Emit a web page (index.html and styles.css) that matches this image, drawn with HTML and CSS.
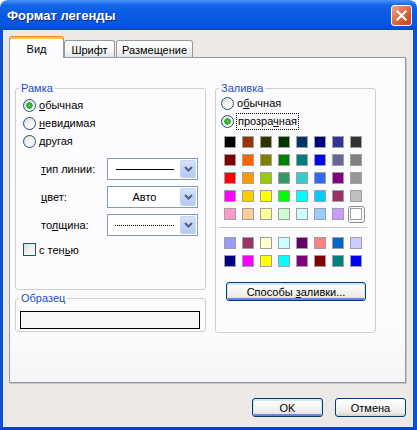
FILE: index.html
```html
<!DOCTYPE html>
<html>
<head>
<meta charset="utf-8">
<link rel="stylesheet" href="styles.css">
</head>
<body>
<div class="window">
  <div class="titlebar">
    <span class="title">Формат легенды</span>
    <div class="close">
      <svg width="11" height="11" viewBox="0 0 11 11"><path d="M1.5 1.5 L9.5 9.5 M9.5 1.5 L1.5 9.5" stroke="#fff" stroke-width="2.2" stroke-linecap="square"/></svg>
    </div>
  </div>
  <div class="frame">
    <div class="tabs">
      <div class="tab tab-active">Вид</div>
      <div class="tab tab-font">Шрифт</div>
      <div class="tab tab-place">Размещение</div>
    </div>
    <div class="panel">
      <div class="col-left">
        <fieldset class="group">
          <legend>Рамка</legend>
          <div class="border-body">
            <div class="radio-row"><span class="radio checked"></span><span><u>о</u>бычная</span></div>
            <div class="radio-row"><span class="radio"></span><span><u>н</u>евидимая</span></div>
            <div class="radio-row"><span class="radio"></span><span>другая</span></div>
            <div class="combos">
              <div class="combo-row">
                <span class="combo-label"><u>т</u>ип линии:</span>
                <div class="combo">
                  <div class="combo-value"><span class="line-solid"></span></div>
                  <div class="combo-btn"><svg width="9" height="6" viewBox="0 0 9 6"><path d="M1 1 L4.5 4.5 L8 1" fill="none" stroke="#4D6185" stroke-width="2"/></svg></div>
                </div>
              </div>
              <div class="combo-row">
                <span class="combo-label"><u>ц</u>вет:</span>
                <div class="combo">
                  <div class="combo-value">Авто</div>
                  <div class="combo-btn"><svg width="9" height="6" viewBox="0 0 9 6"><path d="M1 1 L4.5 4.5 L8 1" fill="none" stroke="#4D6185" stroke-width="2"/></svg></div>
                </div>
              </div>
              <div class="combo-row">
                <span class="combo-label">то<u>л</u>щина:</span>
                <div class="combo">
                  <div class="combo-value"><span class="line-dotted"></span></div>
                  <div class="combo-btn"><svg width="9" height="6" viewBox="0 0 9 6"><path d="M1 1 L4.5 4.5 L8 1" fill="none" stroke="#4D6185" stroke-width="2"/></svg></div>
                </div>
              </div>
            </div>
            <div class="check-row"><span class="check"></span><span>с тен<u>ь</u>ю</span></div>
          </div>
        </fieldset>
        <fieldset class="group group-sample">
          <legend>Образец</legend>
          <div class="sample-body"><div class="sample"></div></div>
        </fieldset>
      </div>
      <fieldset class="group group-fill">
        <legend>Заливка</legend>
        <div class="fill-body">
          <div class="radio-row first"><span class="radio"></span><span>о<u>б</u>ычная</span></div>
          <div class="radio-row"><span class="radio checked"></span><span class="focus">прозра<u>ч</u>ная</span></div>
          <div class="palette">
            <span class="cell" style="background:#000000"></span>
            <span class="cell" style="background:#993300"></span>
            <span class="cell" style="background:#333300"></span>
            <span class="cell" style="background:#003300"></span>
            <span class="cell" style="background:#003366"></span>
            <span class="cell" style="background:#000080"></span>
            <span class="cell" style="background:#333399"></span>
            <span class="cell" style="background:#333333"></span>
            <span class="cell" style="background:#800000"></span>
            <span class="cell" style="background:#FF6600"></span>
            <span class="cell" style="background:#808000"></span>
            <span class="cell" style="background:#008000"></span>
            <span class="cell" style="background:#008080"></span>
            <span class="cell" style="background:#0000FF"></span>
            <span class="cell" style="background:#666699"></span>
            <span class="cell" style="background:#808080"></span>
            <span class="cell" style="background:#FF0000"></span>
            <span class="cell" style="background:#FF9900"></span>
            <span class="cell" style="background:#99CC00"></span>
            <span class="cell" style="background:#339966"></span>
            <span class="cell" style="background:#33CCCC"></span>
            <span class="cell" style="background:#3366FF"></span>
            <span class="cell" style="background:#800080"></span>
            <span class="cell" style="background:#969696"></span>
            <span class="cell" style="background:#FF00FF"></span>
            <span class="cell" style="background:#FFCC00"></span>
            <span class="cell" style="background:#FFFF00"></span>
            <span class="cell" style="background:#00FF00"></span>
            <span class="cell" style="background:#00FFFF"></span>
            <span class="cell" style="background:#00CCFF"></span>
            <span class="cell" style="background:#993366"></span>
            <span class="cell" style="background:#C0C0C0"></span>
            <span class="cell" style="background:#FF99CC"></span>
            <span class="cell" style="background:#FFCC99"></span>
            <span class="cell" style="background:#FFFF99"></span>
            <span class="cell" style="background:#CCFFCC"></span>
            <span class="cell" style="background:#CCFFFF"></span>
            <span class="cell" style="background:#99CCFF"></span>
            <span class="cell" style="background:#CC99FF"></span>
            <span class="cell selected" style="background:#FFFFFF"></span>
          </div>
          <div class="separator"></div>
          <div class="palette">
            <span class="cell" style="background:#9999FF"></span>
            <span class="cell" style="background:#993366"></span>
            <span class="cell" style="background:#FFFFCC"></span>
            <span class="cell" style="background:#CCFFFF"></span>
            <span class="cell" style="background:#660066"></span>
            <span class="cell" style="background:#FF8080"></span>
            <span class="cell" style="background:#0066CC"></span>
            <span class="cell" style="background:#CCCCFF"></span>
            <span class="cell" style="background:#000080"></span>
            <span class="cell" style="background:#FF00FF"></span>
            <span class="cell" style="background:#FFFF00"></span>
            <span class="cell" style="background:#00FFFF"></span>
            <span class="cell" style="background:#800080"></span>
            <span class="cell" style="background:#800000"></span>
            <span class="cell" style="background:#008080"></span>
            <span class="cell" style="background:#0000FF"></span>
          </div>
          <div class="btn btn-fill btn-focus"><span>Способы <u>з</u>аливки...</span></div>
        </div>
      </fieldset>
    </div>
    <div class="buttons">
      <div class="btn btn-focus">OK</div>
      <div class="btn">Отмена</div>
    </div>
  </div>
</div>
</body>
</html>
```

FILE: styles.css
```css
html, body {
  margin: 0;
  padding: 0;
  background: #ffffff;
}

body {
  font-family: "Liberation Sans", Arial, sans-serif;
  font-size: 11px;
  color: #000;
}

.window {
  width: 417px;
  height: 430px;
  display: flex;
  flex-direction: column;
}

.titlebar {
  height: 30px;
  flex: none;
  box-sizing: border-box;
  border-radius: 8px 8px 0 0;
  background: linear-gradient(to bottom, #4A94F8 0px, #3482F3 2px, #1466E8 5px, #0A5CE3 12px, #0858DF 22px, #0552D8 27px, #0A46C4 30px);
  display: flex;
  align-items: center;
  padding: 0 5px 0 7px;
}

.title {
  color: #ffffff;
  font-family: "Liberation Sans", Arial, sans-serif;
  font-weight: bold;
  font-size: 13px;
  text-shadow: 1px 1px 0 #0A2A8C;
  margin-top: 1px;
}

.close {
  margin-left: auto;
  width: 21px;
  height: 21px;
  box-sizing: border-box;
  border: 1px solid #ffffff;
  border-radius: 3px;
  background: linear-gradient(135deg, #EFA488 0%, #E2734F 40%, #CF5328 75%, #C04A22 100%);
  display: flex;
  align-items: center;
  justify-content: center;
}

.frame {
  flex: 1;
  background: #ECE9E6;
  border-left: 3px solid #0B50D8;
  border-right: 4px solid #0B50D8;
  border-bottom: 3px solid #0A42BE;
  padding: 6px 7px 0 6px;
  display: flex;
  flex-direction: column;
}

.tabs {
  display: flex;
  align-items: flex-end;
  height: 21px;
  flex: none;
}

.tab {
  height: 17px;
  box-sizing: border-box;
  border: 1px solid #919B9C;
  border-bottom: none;
  border-radius: 3px 3px 0 0;
  background: linear-gradient(to bottom, #FFFFFF 0%, #F6F6F4 55%, #E2E6EE 100%);
  display: flex;
  align-items: center;
  justify-content: center;
  padding-top: 1px;
}

.tab-active {
  width: 55px;
  height: 22px;
  margin-bottom: -1px;
  position: relative;
  z-index: 2;
  background: #FCFCFE;
  border-top: 1px solid #E68B2C;
  box-shadow: inset 0 2px 0 #FFC73C;
  padding-top: 2px;
}

.tab-font {
  width: 51px;
}

.tab-place {
  width: 77px;
  margin-left: 1px;
}

.panel {
  width: 397px;
  height: 326px;
  flex: none;
  box-sizing: border-box;
  border: 1px solid #919B9C;
  background: linear-gradient(to bottom, #FCFCFE 0%, #FBFBFD 85%, #F5F5F7 100%);
  box-shadow: 1px 1px 0 #C3C7CC;
  display: flex;
  align-items: flex-start;
  gap: 9px;
  padding: 24px 0 0 5px;
}

.col-left {
  width: 191px;
  display: flex;
  flex-direction: column;
}

.group {
  margin: 0;
  padding: 0;
  border: 1px solid #D0D0C8;
  border-radius: 3px;
  min-width: 0;
}

.group legend {
  padding: 0 2px;
  margin-left: 3px;
  color: #1A4FBF;
  line-height: 13px;
  font-size: 11px;
}

.border-body {
  height: 194px;
  padding-left: 7px;
  box-sizing: border-box;
  padding-top: 1px;
}

.radio-row {
  height: 18px;
  display: flex;
  align-items: center;
  gap: 3px;
}

.radio {
  width: 13px;
  height: 13px;
  box-sizing: border-box;
  border: 1px solid #1C5180;
  border-radius: 50%;
  background: linear-gradient(135deg, #DCD9D0 0%, #F4F3EE 50%, #FFFFFF 100%);
  flex: none;
}

.radio.checked {
  background:
    radial-gradient(circle at 50% 50%, #5ED65A 0px, #2FAE2B 2px, #21A121 3px, transparent 3.3px),
    linear-gradient(135deg, #DCD9D0 0%, #F4F3EE 50%, #FFFFFF 100%);
}

.combos {
  margin-top: 8px;
  display: flex;
  flex-direction: column;
  gap: 6px;
}

.combo-row {
  display: flex;
  align-items: center;
  height: 22px;
}

.combo-label {
  width: 66px;
  margin-left: 18px;
}

.combo {
  width: 91px;
  height: 22px;
  box-sizing: border-box;
  border: 1px solid #7F9DB9;
  background: #ffffff;
  display: flex;
}

.combo-value {
  flex: 1;
  display: flex;
  align-items: center;
  justify-content: center;
  padding-left: 2px;
}

.line-solid {
  width: 58px;
  height: 1px;
  background: #000;
}

.line-dotted {
  width: 59px;
  height: 1px;
  background: repeating-linear-gradient(to right, #000 0 1px, transparent 1px 2px);
}

.combo-btn {
  width: 16px;
  margin: 1px;
  box-sizing: border-box;
  border: 1px solid #C3D3FD;
  border-radius: 2px;
  background: linear-gradient(to bottom, #D8E3FB 0%, #C3D4F6 50%, #B4C8EF 100%);
  display: flex;
  align-items: center;
  justify-content: center;
}

.check-row {
  margin-top: 6px;
  height: 15px;
  display: flex;
  align-items: center;
  gap: 3px;
}

.check {
  width: 13px;
  height: 13px;
  box-sizing: border-box;
  border: 1px solid #1C5180;
  background: linear-gradient(135deg, #DCDCD7 0%, #F0F0EC 50%, #FFFFFF 100%);
  flex: none;
}

.group-sample {
  margin-top: 2px;
}

.sample-body {
  padding: 6px 5px 2px 4px;
}

.sample {
  width: 180px;
  height: 18px;
  box-sizing: border-box;
  border: 1px solid #000;
  background: #F7F7F7;
}

.group-fill {
  width: 161px;
  box-sizing: border-box;
}

.fill-body {
  height: 238px;
  box-sizing: border-box;
  padding-left: 5px;
}

.radio-row.first {
  margin-top: -1px;
}

.focus {
  outline: 1px dotted #000;
  outline-offset: 0;
  padding: 1px;
  line-height: 13px;
}

.palette {
  margin-left: 3px;
  display: grid;
  grid-template-columns: repeat(8, 12px);
  grid-auto-rows: 12px;
  gap: 6px;
}

.fill-body .radio-row + .palette {
  margin-top: 6px;
}

.cell {
  width: 12px;
  height: 12px;
  box-sizing: border-box;
  border: 1px solid #A0A0A0;
  position: relative;
}

.cell.selected::after {
  content: "";
  position: absolute;
  left: -3px;
  top: -3px;
  right: -4px;
  bottom: -4px;
  border: 1px solid #8C8C8C;
  border-radius: 3px;
}

.separator {
  margin: 7px 0 9px -2px;
  width: 148px;
  height: 1px;
  background: #C8C8C4;
}

.btn {
  width: 71px;
  height: 19px;
  box-sizing: border-box;
  border: 1px solid #003C74;
  border-radius: 3px;
  background: linear-gradient(to bottom, #FFFFFF 0%, #F5F5F2 45%, #ECEBE6 80%, #D6D0C5 100%);
  display: flex;
  align-items: center;
  justify-content: center;
  flex: none;
}

.btn-focus {
  box-shadow: inset 0 1px 0 1px #CEE7FF, inset 0 -1px 0 1px #6982EE;
}

.btn-fill {
  width: 140px;
  margin-top: 15px;
  margin-left: 5px;
}

.buttons {
  margin-top: 15px;
  display: flex;
  justify-content: flex-end;
  gap: 12px;
}
```
